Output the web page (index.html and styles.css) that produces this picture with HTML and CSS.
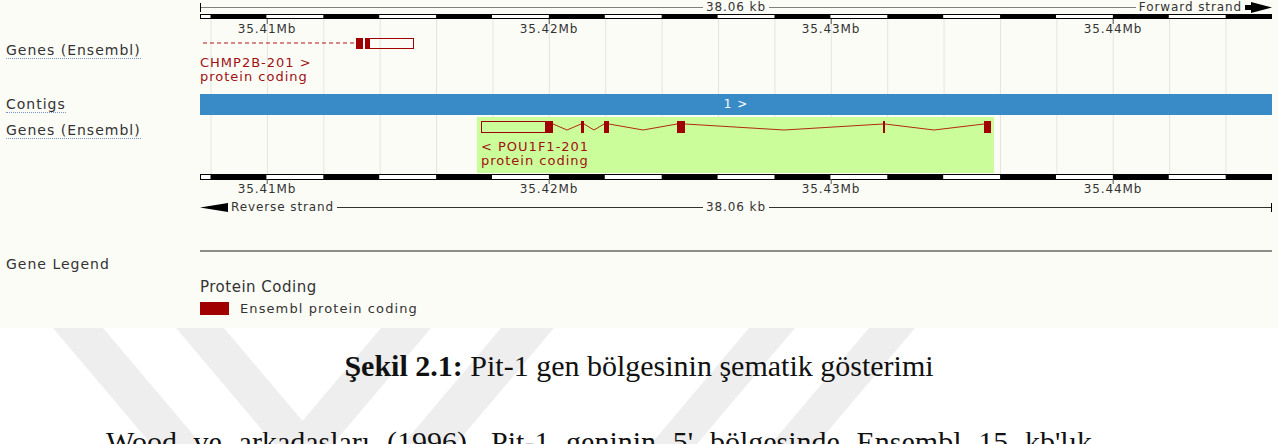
FILE: index.html
```html
<!DOCTYPE html>
<html lang="tr">
<head>
    <meta charset="UTF-8">
    <meta name="viewport" content="width=device-width, initial-scale=1.0">
    <title>Pit-1 gen bölgesi</title>
    <link rel="stylesheet" href="styles.css">
</head>
<body>
<div class="page">

    <!-- Ensembl bölge görünümü -->
    <div class="figure">
        <div class="panel">

            <!-- üst ölçek çizgisi -->
            <div class="label"></div>
            <div class="scale">
                <div class="scale-side">
                    <span class="end-tick"></span>
                    <span class="scale-line"></span>
                </div>
                <span class="scale-text">38.06 kb</span>
                <div class="scale-side">
                    <span class="scale-line"></span>
                    <span class="scale-text">Forward strand</span>
                    <svg class="strand-arrow" width="27" height="11" viewBox="0 0 27 11"><polygon points="0,3 6,3 6,0 27,5.5 6,11 6,8 0,8" fill="#000"/></svg>
                </div>
            </div>

            <div class="label"></div>
            <div class="ruler"></div>

            <div class="label"></div>
            <div class="ticks grid">
                <span class="tick" style="left: 67px">35.41Mb</span>
                <span class="tick" style="left: 349px">35.42Mb</span>
                <span class="tick" style="left: 631px">35.43Mb</span>
                <span class="tick" style="left: 913px">35.44Mb</span>
            </div>

            <!-- ileri zincir genleri -->
            <div class="label gene-label"><span class="link">Genes (Ensembl)</span></div>
            <div class="track grid">
                <svg class="track-svg" width="1072" height="58">
                    <line x1="3" y1="7" x2="156" y2="7" stroke="#b01515" stroke-width="1.2" stroke-dasharray="4 3"/>
                    <rect x="156" y="2" width="7" height="11" fill="#a00000"/>
                    <rect x="165" y="2" width="4" height="11" fill="#a00000"/>
                    <rect x="169.5" y="2.5" width="44" height="10" fill="none" stroke="#a00000"/>
                    <text x="0" y="31" class="gene-name">CHMP2B-201 &gt;</text>
                    <text x="0" y="45" class="gene-name">protein coding</text>
                </svg>
            </div>

            <div class="label contig-label"><span class="link">Contigs</span></div>
            <div class="contig-row grid">
                <div class="contig">1 &gt;</div>
            </div>

            <!-- ters zincir genleri -->
            <div class="label gene-label lower"><span class="link">Genes (Ensembl)</span></div>
            <div class="track grid">
                <svg class="track-svg" width="1072" height="59">
                    <rect x="277" y="2" width="517" height="56" fill="#ccfd9b"/>
                    <rect x="281.5" y="6.5" width="64" height="11" fill="none" stroke="#a00000"/>
                    <rect x="345" y="6" width="8" height="12" fill="#a00000"/>
                    <polyline points="353,9 367,15 381,9" fill="none" stroke="#b02a10"/>
                    <rect x="381" y="6" width="3" height="12" fill="#a00000"/>
                    <polyline points="384,9 394,15 404,9" fill="none" stroke="#b02a10"/>
                    <rect x="404" y="6" width="5" height="12" fill="#a00000"/>
                    <polyline points="409,9 443,15 477,9" fill="none" stroke="#b02a10"/>
                    <rect x="477" y="6" width="8" height="12" fill="#a00000"/>
                    <polyline points="485,9 584,15 683,9" fill="none" stroke="#b02a10"/>
                    <rect x="683" y="6" width="2" height="12" fill="#a00000"/>
                    <polyline points="685,9 734,15 784,9" fill="none" stroke="#b02a10"/>
                    <rect x="784" y="6" width="7" height="12" fill="#a00000"/>
                    <text x="281" y="36" class="gene-name">&lt; POU1F1-201</text>
                    <text x="281" y="50" class="gene-name">protein coding</text>
                </svg>
            </div>

            <div class="label"></div>
            <div class="ruler lower"></div>

            <div class="label"></div>
            <div class="ticks lower">
                <span class="tick" style="left: 67px">35.41Mb</span>
                <span class="tick" style="left: 349px">35.42Mb</span>
                <span class="tick" style="left: 631px">35.43Mb</span>
                <span class="tick" style="left: 913px">35.44Mb</span>
            </div>

            <!-- alt ölçek çizgisi -->
            <div class="label"></div>
            <div class="scale lower">
                <div class="scale-side">
                    <svg class="strand-arrow" width="28" height="9" viewBox="0 0 28 9"><polygon points="0,4.5 28,0 28,9" fill="#000"/></svg>
                    <span class="scale-text">Reverse strand</span>
                    <span class="scale-line"></span>
                </div>
                <span class="scale-text">38.06 kb</span>
                <div class="scale-side">
                    <span class="scale-line"></span>
                    <span class="end-tick"></span>
                </div>
            </div>

            <div class="label"></div>
            <div></div>

            <div class="label"></div>
            <div class="legend-rule"></div>

            <div class="label legend-label">Gene Legend</div>
            <div class="legend">
                <div class="legend-title">Protein Coding</div>
                <div class="legend-item">
                    <span class="swatch"></span>
                    <span>Ensembl protein coding</span>
                </div>
            </div>
        </div>
    </div>

    <!-- sayfa filigranı -->
    <svg class="watermark" width="1278" height="116" viewBox="0 0 1278 116">
        <polygon points="53,0 103,0 201,116 151,116"/>
        <polygon points="176,0 224,0 322,116 274,116"/>
        <polygon points="381,0 431,0 333,116 283,116"/>
        <polygon points="501,0 554,0 456,116 403,116"/>
        <polygon points="749,0 795,0 697,116 651,116"/>
        <polygon points="869,0 915,0 817,116 771,116"/>
    </svg>

    <p class="caption"><b>Şekil 2.1:</b> Pit-1 gen bölgesinin şematik gösterimi</p>

    <p class="body-text">Wood ve arkadaşları (1996), Pit-1 geninin 5' bölgesinde Ensembl 15 kb'lık</p>
</div>
</body>
</html>
```

FILE: styles.css
```css
body {
    margin: 0;
    background: #fff;
    font-family: "DejaVu Sans", sans-serif;
    color: #333;
}

.page {
    position: relative;
    width: 1278px;
    height: 444px;
    overflow: hidden;
}

.figure {
    position: relative;
    z-index: 1;
    height: 328px;
    background: #fcfcf7;
}

.panel {
    display: grid;
    grid-template-columns: 200px 1072px;
    grid-template-rows: 14px 5px 17px 58px 21px 59px 6px 18px 18px 34px 2px auto;
}

/* sol etiket sütunu */
.label {
    padding-left: 6px;
    font-size: 14px;
    letter-spacing: 1px;
    line-height: 16px;
    color: #333;
}

.label .link {
    border-bottom: 1px dotted #7a93c6;
}

.gene-label {
    padding-top: 6px;
}

.gene-label.lower {
    padding-top: 7px;
}

.contig-label {
    line-height: 21px;
}

.legend-label {
    padding-top: 4px;
}

/* dikey kılavuz çizgileri, 2 kb aralık */
.grid {
    background-image: linear-gradient(to right, #e3e3e0 1px, transparent 1px);
    background-size: 56.4px 100%;
    background-position: 10.5px 0;
}

/* ölçek çizgileri */
.scale {
    display: grid;
    grid-template-columns: 1fr auto 1fr;
    align-items: center;
    font-size: 12px;
    letter-spacing: 0.9px;
    line-height: 14px;
    color: #333;
}

.scale.lower {
    line-height: 18px;
}

.scale-side {
    display: flex;
    align-items: center;
}

.scale-line {
    flex: 1;
    height: 1px;
    background: #808080;
}

.scale.lower .scale-line {
    background: #333;
}

.scale-text {
    padding: 0 3px;
}

.end-tick {
    width: 1px;
    height: 9px;
    background: #000;
}

.strand-arrow {
    display: block;
}

.ruler {
    box-sizing: border-box;
    border: 1px solid #000;
    background-color: #fff;
    background-image: linear-gradient(to right, #000 50%, #fff 50%);
    background-size: 112.8px 100%;
    background-position: 10.5px 0;
    background-origin: border-box;
}

.ticks {
    position: relative;
    font-size: 12px;
    letter-spacing: 0.9px;
    line-height: 14px;
    color: #333;
}

.tick {
    position: absolute;
    top: 3px;
    transform: translateX(-50%);
    white-space: nowrap;
}

.tick::before {
    content: "";
    position: absolute;
    left: 50%;
    top: -3px;
    width: 1px;
    height: 5px;
    background: #555;
}

.ticks.lower .tick {
    top: 2px;
}

/* iz alanları */
.track {
    position: relative;
}

.track-svg {
    display: block;
}

.gene-name {
    font-family: "DejaVu Sans", sans-serif;
    font-size: 13px;
    letter-spacing: 1px;
    fill: #a01010;
}

.contig-row {
    display: flex;
}

.contig {
    flex: 1;
    background: #388bc6;
    color: #fff;
    font-size: 12px;
    letter-spacing: 1px;
    line-height: 21px;
    text-align: center;
}

/* gen açıklaması */
.legend-rule {
    background: #8c8c8c;
}

.legend {
    padding-top: 25px;
}

.legend-title {
    font-size: 15px;
    letter-spacing: 0.5px;
    line-height: 20px;
    color: #333;
}

.legend-item {
    display: flex;
    align-items: center;
    gap: 11px;
    margin-top: 4px;
    font-size: 13px;
    letter-spacing: 1.1px;
    line-height: 15px;
    color: #333;
}

.swatch {
    width: 29px;
    height: 13px;
    background: #a00000;
}

/* sayfa metni */
.watermark {
    position: absolute;
    left: 0;
    top: 328px;
    fill: #eeeeee;
}

.caption,
.body-text {
    position: relative;
    margin: 0;
    font-family: "Liberation Serif", serif;
    font-size: 30px;
    line-height: 34px;
    color: #111;
}

.caption {
    margin-top: 21px;
    text-align: center;
}

.body-text {
    margin-top: 42px;
    margin-left: 106px;
    width: 986px;
    text-align: justify;
    text-align-last: justify;
}
```
